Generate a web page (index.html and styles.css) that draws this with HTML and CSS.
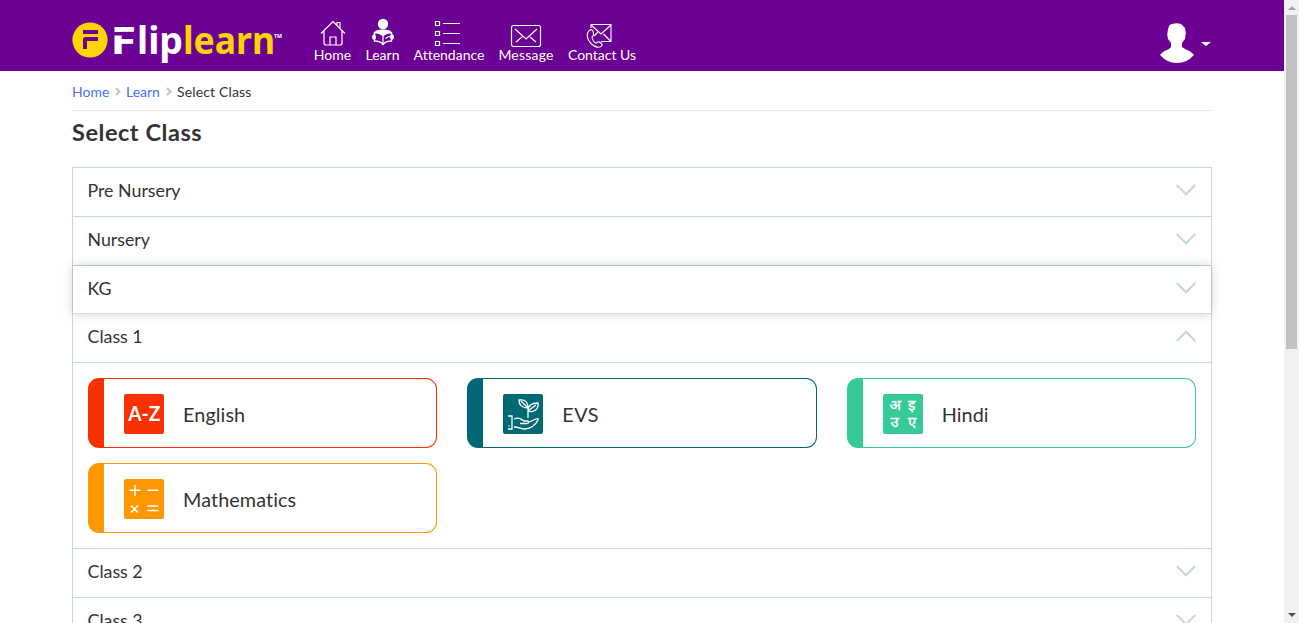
FILE: index.html
```html
<!DOCTYPE html>
<html lang="en">
<head>
<meta charset="utf-8">
<title>Fliplearn - Select Class</title>
<link rel="stylesheet" href="styles.css">
</head>
<body>
<svg width="0" height="0" class="defs"><defs>
<symbol id="down" viewBox="0 0 20 12"><path d="M.7 1 10 10.3 19.3 1" fill="none" stroke="#c4d7e4" stroke-width="2"/></symbol>
<symbol id="crumb" viewBox="0 0 6 9"><path d="M1 1l3.500 3.500L1 8" fill="none" stroke="#c4c4c4" stroke-width="2"/></symbol>
</defs></svg>
<div class="page">
<header class="header">
  <svg class="logo" width="212" height="54" viewBox="0 0 212 54">
    <circle cx="18" cy="24" r="17.600" fill="#ffd400"/>
    <path d="M11 14h15v4H11zM14 21h12v4H15v8h-4v-9q0-3 3-3z" fill="#6d0094"/>
    <g class="logo-type">
      <text x="38.300" y="38" textLength="26" lengthAdjust="spacingAndGlyphs" fill="#fff">F</text>
      <text x="65" y="38" textLength="46" lengthAdjust="spacingAndGlyphs" fill="#fff">lip</text>
      <text x="111" y="38" textLength="92" lengthAdjust="spacingAndGlyphs" fill="#ffd400">learn</text>
    </g>
    <path d="M40 16h24v3.500H40z" fill="#6d0094"/>
    <text class="tm" x="202" y="22" textLength="8" lengthAdjust="spacingAndGlyphs">TM</text>
  </svg>
  <nav class="nav">
    <a class="w-home"><svg width="26" height="28" viewBox="0 0 26 28" fill="none" stroke="#fff" stroke-width="1.200"><path d="M1 14.500 13 2.500l12 12M4 12v12q0 2 2 2h14q2 0 2-2V12M10 26v-8h6v8M17 6V3.500h3V9"/></svg><span>Home</span></a>
    <a class="w-learn"><svg width="26" height="28" viewBox="0 0 26 28"><circle cx="13" cy="5" r="5.200" fill="#fff"/><path d="M3.500 15 6 11.500q7-2 14 0l2.500 3.500L13 17z" fill="#fff"/><path d="M4.500 13.500q5 0 8.500 3 3.500-3 8.500-3V22q-6 0-8.500 3.500-2.500-3.500-8.500-3.500z" fill="#6d0094" stroke="#fff" stroke-width="1.400"/><path d="M13 16v9M15.500 19.500q2-2 4.500-2" stroke="#fff" fill="none" stroke-width="1.200"/><ellipse cx="4" cy="18" rx="2" ry="2.700" fill="#fff"/><ellipse cx="22" cy="18" rx="2" ry="2.700" fill="#fff"/></svg><span>Learn</span></a>
    <a class="w-att"><svg width="28" height="28" viewBox="0 0 28 28" fill="none" stroke="#fff" stroke-width="1.200"><path d="M2.500 2.500h4v4h-4zM2.500 12.500h4v4h-4zM2.500 22.500h4v4h-4zM10 4.500h17M10 14.500h17M10 24.500h17"/></svg><span>Attendance</span></a>
    <a class="w-msg"><svg width="32" height="28" viewBox="0 0 32 28" fill="none" stroke="#fff" stroke-width="1.200"><rect x="1.500" y="6.500" width="29" height="21" rx="2"/><path d="M5 10l11 10L27 10M6 23l6-5M26 23l-6-5"/></svg><span>Message</span></a>
    <a class="w-contact"><svg width="26" height="28" viewBox="0 0 26 28" fill="none" stroke="#fff" stroke-width="1.100"><path d="M5 9V5.500h20v17H15M5 6l10 9 10-9M24.500 22l-7-7M12 13l-4 4"/><path d="M5 10.500c-6 3-4 10 0 14s9 5 11 2c.8-1.600-2.500-4-4-3.500-1.500.5-1 1.500-2.500 1C8 23 6.500 21 6 18.500c-.3-1.300 1.500-1 1.500-3 0-2-1-4.700-2.500-5z"/></svg><span>Contact Us</span></a>
  </nav>
  <div class="user">
    <svg width="36" height="42" viewBox="0 0 36 42"><path d="M13 2q5-1.500 9 0l4 4 .8 5-.8 6-3 4v4l3 2q6 2 9 6-7 8-17 8T1 33q3-4 9-6l2-2v-4l-3-4-.8-4.500L9 7l1.500-4z" fill="#fff"/></svg>
    <i class="caret"></i>
  </div>
</header>
<main class="main">
  <div class="crumbs"><a class="c1">Home</a><svg width="6" height="9"><use href="#crumb"/></svg><a class="c2">Learn</a><svg width="6" height="9"><use href="#crumb"/></svg><span>Select Class</span></div>
  <h1>Select Class</h1>
  <div class="accordion">
    <div class="row"><span>Pre Nursery</span><svg width="20" height="12"><use href="#down"/></svg></div>
    <div class="row"><span>Nursery</span><svg width="20" height="12"><use href="#down"/></svg></div>
    <div class="row hovered"><span>KG</span><svg width="20" height="12"><use href="#down"/></svg></div>
    <div class="row open"><span>Class 1</span><svg class="up" width="20" height="12"><use href="#down"/></svg></div>
    <div class="subjects">
      <div class="card english"><svg width="40" height="40"><rect width="40" height="40" rx="2" fill="#f93100"/><text class="az" x="4.300" y="27" textLength="32" lengthAdjust="spacingAndGlyphs">A-Z</text></svg><span>English</span></div>
      <div class="card evs"><svg width="40" height="40" viewBox="0 0 40 40" fill="none" stroke="#fff" stroke-width="1.300"><rect width="40" height="40" rx="2" fill="#006974" stroke="none"/><path d="M25 24V13M25 14c-6 0-9-3-9-8 6-1 9 2 9 8zM25 17c0-5 3-8 10-8 1 6-4 10-10 8zM18 7l7 7M33 11l-8 6M5 22h4v13H5M5.500 32h1M11 25c5-2 7 0 10 2h4q2 2-1 2.500h-7M26 28l7-3q3-1 2 1-4 8-13 9c-4 0-6-2-11-2"/></svg><span>EVS</span></div>
      <div class="card hindi"><svg width="40" height="40"><rect width="40" height="40" rx="2" fill="#37ca99"/><g class="deva"><text x="6.500" y="16">अ</text><text x="25" y="16">इ</text><text x="7.500" y="33">उ</text><text x="25" y="33">ए</text></g></svg><span>Hindi</span></div>
      <div class="card maths"><svg width="40" height="40" fill="none" stroke="#fff" stroke-width="1.500"><rect width="40" height="40" rx="2" fill="#ff9800" stroke="none"/><path d="M5.500 11.300h11M11 6v11M23.500 11.300h11M7 26.500l7 7M14 26.500l-7 7M23.500 27h11M23.500 31.500h11"/></svg><span>Mathematics</span></div>
    </div>
    <div class="row"><span>Class 2</span><svg width="20" height="12"><use href="#down"/></svg></div>
    <div class="row last"><span>Class 3</span><svg width="20" height="12"><use href="#down"/></svg></div>
  </div>
</main>
</div>
<aside class="scrollbar"><i class="arrow-up"></i><i class="thumb"></i><i class="arrow-down"></i></aside>
</body>
</html>
```
FILE: styles.css
```css
* { box-sizing: border-box; }
body { margin: 0; width: 1299px; height: 623px; overflow: hidden; display: flex; background: #fff; color: #333; font-family: Lato, sans-serif; font-variant-ligatures: none; }
svg { display: block; flex: none; overflow: visible; }
.defs { position: absolute; }
.page { width: 1284px; height: 623px; overflow: hidden; }
.header { height: 71px; background: #6d0094; padding-left: 72px; display: flex; align-items: flex-start; }
.logo { margin-top: 16px; }
.logo-type { font: bold 37px "Noto Sans", sans-serif; }
.tm { font: bold 6px "Noto Sans", sans-serif; fill: #fff; }
.nav { display: flex; gap: 14px; margin: 19px 0 0 30px; }
.nav a { display: flex; flex-direction: column; align-items: center; color: #fff; font-size: 14px; line-height: 16px; white-space: nowrap; }
.w-home { width: 37px; }
.w-learn { width: 35px; }
.w-att { width: 70px; }
.w-msg { width: 56px; letter-spacing: .2px; }
.w-contact { width: 68px; }
.w-att svg { margin-right: 4px; }
.w-contact svg { margin-right: 6px; }
.user { margin: 22px 73px 0 auto; display: flex; align-items: center; gap: 6px; }
.caret { margin-top: 1px; border: 5px solid transparent; border-top: 4px solid #fff; border-bottom: 0; }
.main { padding: 0 72px; }
.crumbs { height: 40px; padding-top: 1px; border-bottom: 1px solid #e9e9e9; display: flex; align-items: center; gap: 5.500px; font-size: 14px; }
.crumbs a { color: #4f6df5; }
.c1 { width: 37px; }
.c2 { width: 34px; }
.crumbs span { letter-spacing: .15px; }
h1 { margin: 7px 0 20px; font-size: 23.500px; line-height: 29px; font-weight: bold; letter-spacing: .55px; }
.accordion { border: 1px solid #c4d7e4; border-bottom: 0; }
.row { height: 49px; padding: 0 15px 5px 14.500px; display: flex; align-items: center; justify-content: space-between; border-bottom: 1px solid #c4d7e4; font-size: 17.800px; }
.hovered { position: relative; height: 48px; padding-bottom: 4px; border-bottom-color: #d2dce2; box-shadow: 0 0 10px rgba(0,0,0,.2); }
.open { padding-bottom: 4px; }
.up { transform: rotate(180deg); }
.subjects { padding: 15px; display: grid; grid-template-columns: repeat(3, 1fr); gap: 15px 30px; border-bottom: 1px solid #c4d7e4; }
.card { height: 70px; padding: 2px 0 0 20px; border: 1px solid; border-left-width: 16px; border-radius: 11px; display: flex; align-items: center; gap: 19px; }
.card span { color: #333; font-size: 19.800px; letter-spacing: .1px; }
.card.evs span { letter-spacing: .5px; }
.english { border-color: #f93100; }
.evs { border-color: #006974; }
.hindi { border-color: #37ca99; }
.maths { border-color: #ff9800; }
.az { font: bold 20px Lato, sans-serif; fill: #fff; }
.deva { font: 15px "Noto Sans Devanagari", "Noto Sans", sans-serif; fill: #fff; stroke: #fff; stroke-width: .3px; }
.scrollbar { width: 15px; height: 623px; background: #f1f1f1; display: flex; flex-direction: column; align-items: center; }
.arrow-up { margin: 6px 0 5px; border: 4px solid transparent; border-bottom-color: #a3a3a3; border-top: 0; }
.thumb { width: 11px; height: 334px; background: #c1c1c1; }
.arrow-down { margin: auto 0 6px; border: 4px solid transparent; border-top-color: #505050; border-bottom: 0; }
```
